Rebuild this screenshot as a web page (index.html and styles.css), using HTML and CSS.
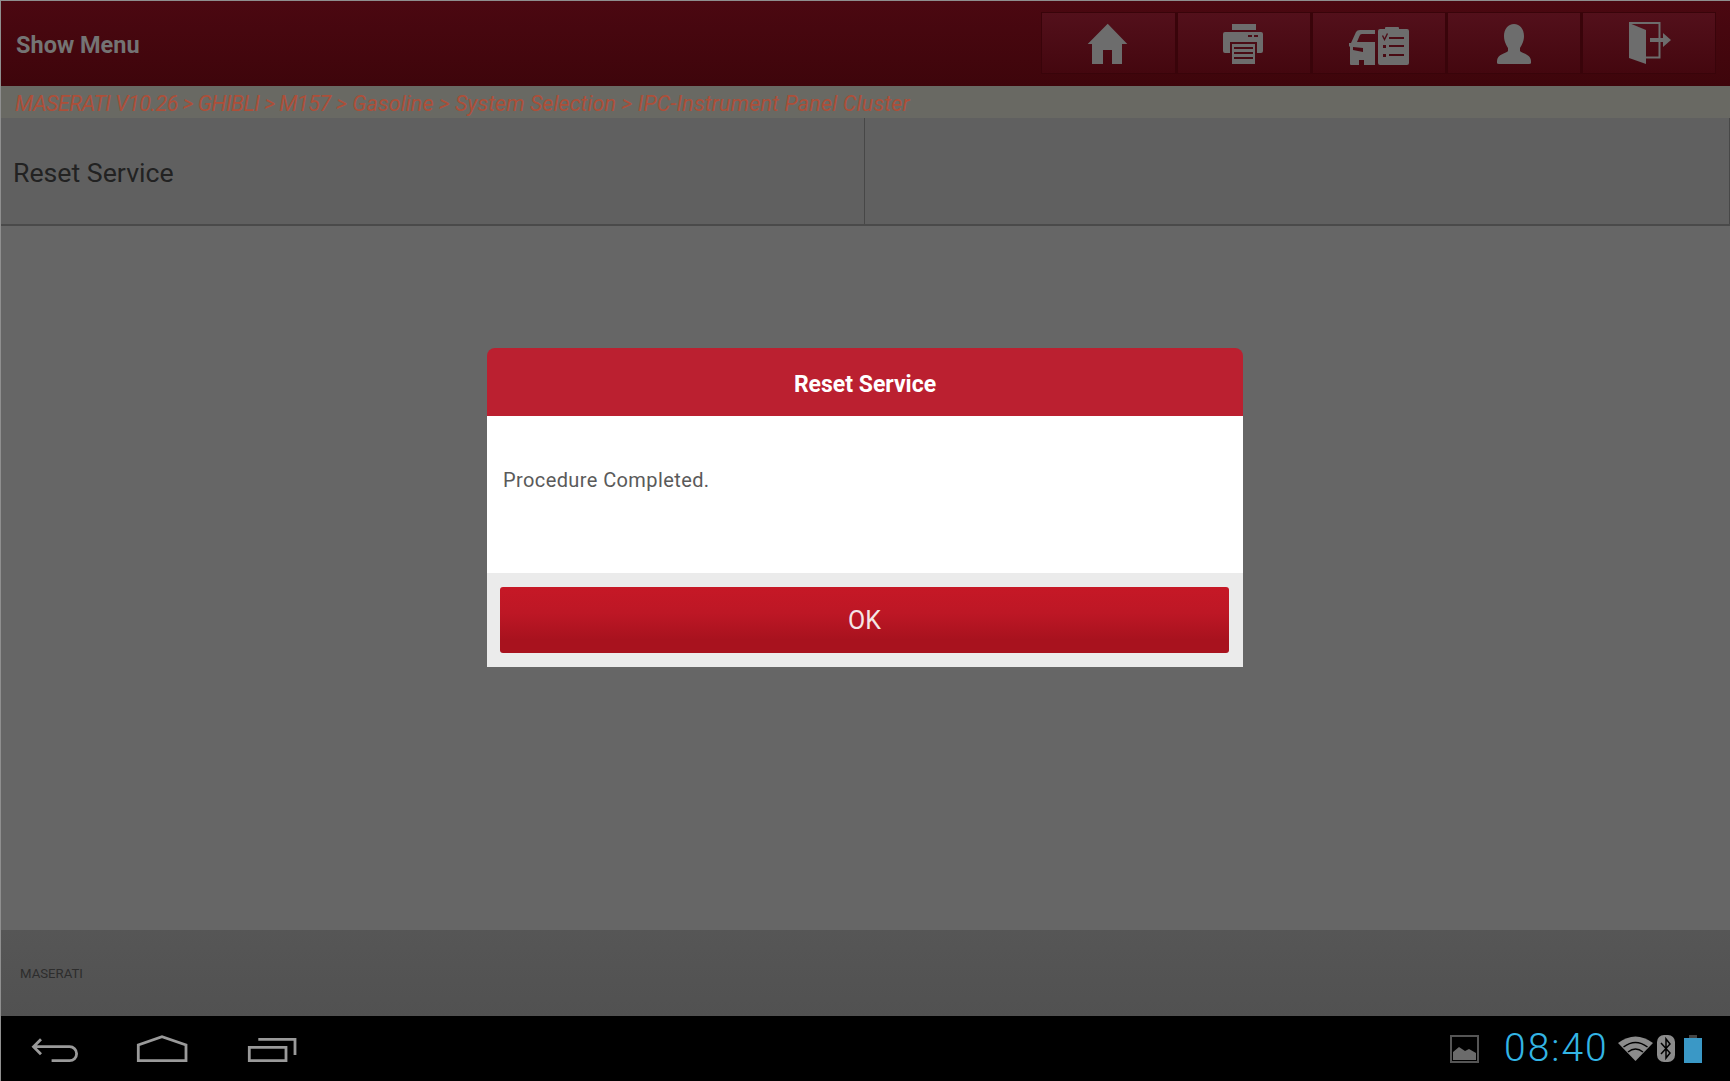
FILE: index.html
```html
<!DOCTYPE html>
<html lang="en">
<head>
<meta charset="utf-8">
<title>Reset Service</title>
<link rel="stylesheet" href="styles.css">
</head>
<body>
<div class="screen">
  <header class="topbar">
    <div class="menu-label">Show Menu</div>
    <nav class="tools">
      <div class="tool"><svg class="tool-icon" viewBox="0 0 135 61"><path d="M66.7 11.7 86.3 32H81V52H71V38H62V52H51V32H46.7Z"/></svg></div>
      <div class="tool"><svg class="tool-icon" viewBox="0 0 135 61"><path d="M55 12H79V18H55Z"/><path fill-rule="evenodd" d="M48 20H84Q86 20 86 22V39Q86 41 84 41H80V30H53V41H48Q46 41 46 39V22Q46 20 48 20ZM71 23V25H75V23ZM77 23V25H81V23Z"/><path fill-rule="evenodd" d="M55 32H78V52H55ZM57 35V37H76V35ZM57 40V42H76V40ZM57 45V47H76V45Z"/></svg></div>
      <div class="tool"><svg class="tool-icon" viewBox="0 0 135 61"><path fill-rule="evenodd" d="M39 31 44 20Q45 18 48 18H63V22H50Q48 22 47.500 24L45 30H63V53H52V48H47V53H39Q38 53 38 52V35L37 34V31ZM41 35V38L51 40V36Z"/><path fill-rule="evenodd" d="M74 15H86Q87 15 87 16V17H95Q97 17 97 19V51Q97 53 95 53H68Q66 53 66 51V19Q66 17 68 17H73V16Q73 15 74 15ZM71 23 72.500 26 75 21 76 22 72.500 29 70 24ZM77 25V27H92V25ZM71 33V36H74V33ZM77 33V35H92V33ZM71 42V45H74V42ZM77 42V44H92V42Z"/></svg></div>
      <div class="tool"><svg class="tool-icon" viewBox="0 0 135 61"><path d="M67 12C73 12 77 17 77 24C77 30 74 34 73 36V39C74 41 84 42 84 49V51Q84 52 82 52H52Q50 52 50 51V49C50 42 60 41 61 39V36C60 34 57 30 57 24C57 17 61 12 67 12Z"/></svg></div>
      <div class="tool"><svg class="tool-icon" viewBox="0 0 135 61"><path d="M47 11 64 18V52L47 46Z"/><path class="door-frame" d="M47 11H77.500V45.500H64"/><path d="M68 26H81V21L89 28 81 35V30H68Z"/></svg></div>
    </nav>
  </header>
  <div class="breadcrumb"><span class="crumb-tight">MASERATI V10.26 &gt; GHIBLI &gt; M157</span> &gt; Gasoline &gt; System Selection &gt; <span class="crumb-wide">IPC-Instrument Panel Cluster</span></div>
  <section class="rows">
    <div class="cell">Reset Service</div>
    <div class="cell"></div>
  </section>
  <main class="content"></main>
  <footer class="brandbar">MASERATI</footer>
  <div class="sysbar">
    <div class="sys-nav">
      <svg class="nav-icon" viewBox="0 0 60 65"><path d="M17 23.300 9.500 30.700 17 38.300M9.500 30.700H45.600a7 7 0 0 1 0 14H27.600"/></svg>
      <svg class="nav-icon" viewBox="0 0 60 65"><path d="M5.300 44.700V29L29 20.700 53 29V44.700Z"/></svg>
      <svg class="nav-icon" viewBox="0 0 60 65"><path d="M7.300 31.300H44V44.700H7.300ZM16.300 23.300H53V39"/></svg>
    </div>
    <div class="sys-status">
      <svg class="pic-icon" viewBox="0 0 29 28"><path class="pic-frame" d="M1 1H28V27H1Z"/><path d="M3 25V17L9 12 15 16 19 14 26 18V25Z"/></svg>
      <div class="clock">08:40</div>
      <svg class="wifi-icon" viewBox="0 0 35 25"><path d="M0 7Q17.500-6 35 7L17.500 25Z"/><path class="wifi-gap" d="M5.500 11Q17.500 2 29.500 11M10 16Q17.500 10 25 16"/></svg>
      <svg class="bt-icon" viewBox="0 0 18 27"><rect width="18" height="27" rx="7"/><path class="bt-rune" d="M4 8 13 18 9 23V4L13 9 4 19"/></svg>
      <svg class="batt-icon" viewBox="0 0 18 28"><path class="batt-cap" d="M5 0H13V3H5Z"/><path class="batt-fill" d="M0 3H18V28H0Z"/></svg>
    </div>
  </div>
  <div class="dialog">
    <div class="dialog-title">Reset Service</div>
    <div class="dialog-body">Procedure Completed.</div>
    <div class="dialog-actions"><div class="ok-button">OK</div></div>
  </div>
</div>
</body>
</html>
```
FILE: styles.css
```css
* { box-sizing: border-box; }
html, body { margin: 0; padding: 0; }
body { width: 1730px; height: 1081px; overflow: hidden; background: #000; font-family: Roboto, "Liberation Sans", sans-serif; }
.screen { position: relative; width: 1730px; height: 1081px; display: flex; flex-direction: column; border-left: 1px solid #8f8f8f; border-top: 1px solid #8f8f8f; }
.topbar { height: 85px; flex: none; display: flex; align-items: center; justify-content: space-between; padding: 0 14px 0 15px; background: linear-gradient(#4b0811, #3e050b); }
.menu-label { color: #747474; font-size: 23.500px; font-weight: 700; padding-top: 2px; }
.tools { display: flex; margin-top: -1px; }
.tool { width: 135px; height: 62px; border: 1px solid #39040a; background: linear-gradient(#53101b, #44070f); }
.tool + .tool { border-left-width: 2px; }
.tool-icon { display: block; width: 135px; height: 61px; margin: -1px 0 0 -1px; fill: #6d6d6d; }
.door-frame { fill: none; stroke: #6d6d6d; stroke-width: 2; }
.breadcrumb { height: 32px; flex: none; padding: 2px 0 0 14px; line-height: 31px; font-size: 21.600px; font-style: italic; color: #ad4f39; background: #696963; white-space: nowrap; }
.crumb-tight { letter-spacing: -.55px; }
.crumb-wide { letter-spacing: .12px; }
.rows { height: 108px; flex: none; display: flex; background: #606060; border-bottom: 2px solid #4a4a4a; }
.cell { width: 864px; padding: 3px 0 0 12px; line-height: 104px; font-size: 26.700px; color: #222; border-right: 1px solid #474747; }
.cell + .cell { width: auto; flex: 1; }
.content { flex: 1; background: #666; }
.brandbar { height: 86px; flex: none; padding-left: 19px; line-height: 87px; font-size: 13.200px; color: #2d2d2d; background: linear-gradient(#565656, #515151); }
.sysbar { height: 65px; flex: none; display: flex; align-items: center; justify-content: space-between; background: #000; padding: 0 28px 0 23px; }
.sys-nav { display: flex; gap: 49px; }
.nav-icon { display: block; width: 60px; height: 65px; fill: none; stroke: #9a9a9a; stroke-width: 2.800; }
.sys-status { display: flex; align-items: center; }
.pic-icon { width: 29px; height: 28px; fill: #6b6b6b; margin-right: 25px; }
.pic-frame { fill: none; stroke: #555; stroke-width: 2; }
.clock { width: 102px; font-size: 39px; letter-spacing: 2px; white-space: nowrap; font-weight: 300; color: #33b5e5; margin-right: 12px; line-height: 1; }
.wifi-icon { width: 35px; height: 25px; fill: #8c8c8c; margin-right: 4px; }
.wifi-gap { fill: none; stroke: #000; stroke-width: 1.500; }
.bt-icon { width: 18px; height: 27px; fill: #8c8c8c; margin-right: 9px; }
.bt-rune { fill: none; stroke: #000; stroke-width: 1.500; }
.batt-icon { width: 18px; height: 28px; }
.batt-cap { fill: #444; }
.batt-fill { fill: #3a98c6; }
.dialog { position: absolute; left: 486px; top: 347px; width: 756px; height: 319px; display: flex; flex-direction: column; border-radius: 8px 8px 0 0; overflow: hidden; }
.dialog-title { height: 68px; flex: none; padding-top: 3px; text-align: center; line-height: 68px; font-size: 23px; font-weight: 700; color: #fff; background: #bb2030; }
.dialog-body { height: 157px; flex: none; padding: 49px 0 0 16px; font-size: 20px; line-height: 30px; letter-spacing: .4px; color: #5a5a5a; background: #fff; }
.dialog-actions { flex: 1; padding: 14px 14px 14px 13px; background: #ebebeb; }
.ok-button { height: 66px; border-radius: 3px; text-align: center; line-height: 68px; font-size: 25px; color: #f4e6e6; background: linear-gradient(#c61826 0%, #bd1725 40%, #a8121e 80%, #a8121e 100%); }
```
